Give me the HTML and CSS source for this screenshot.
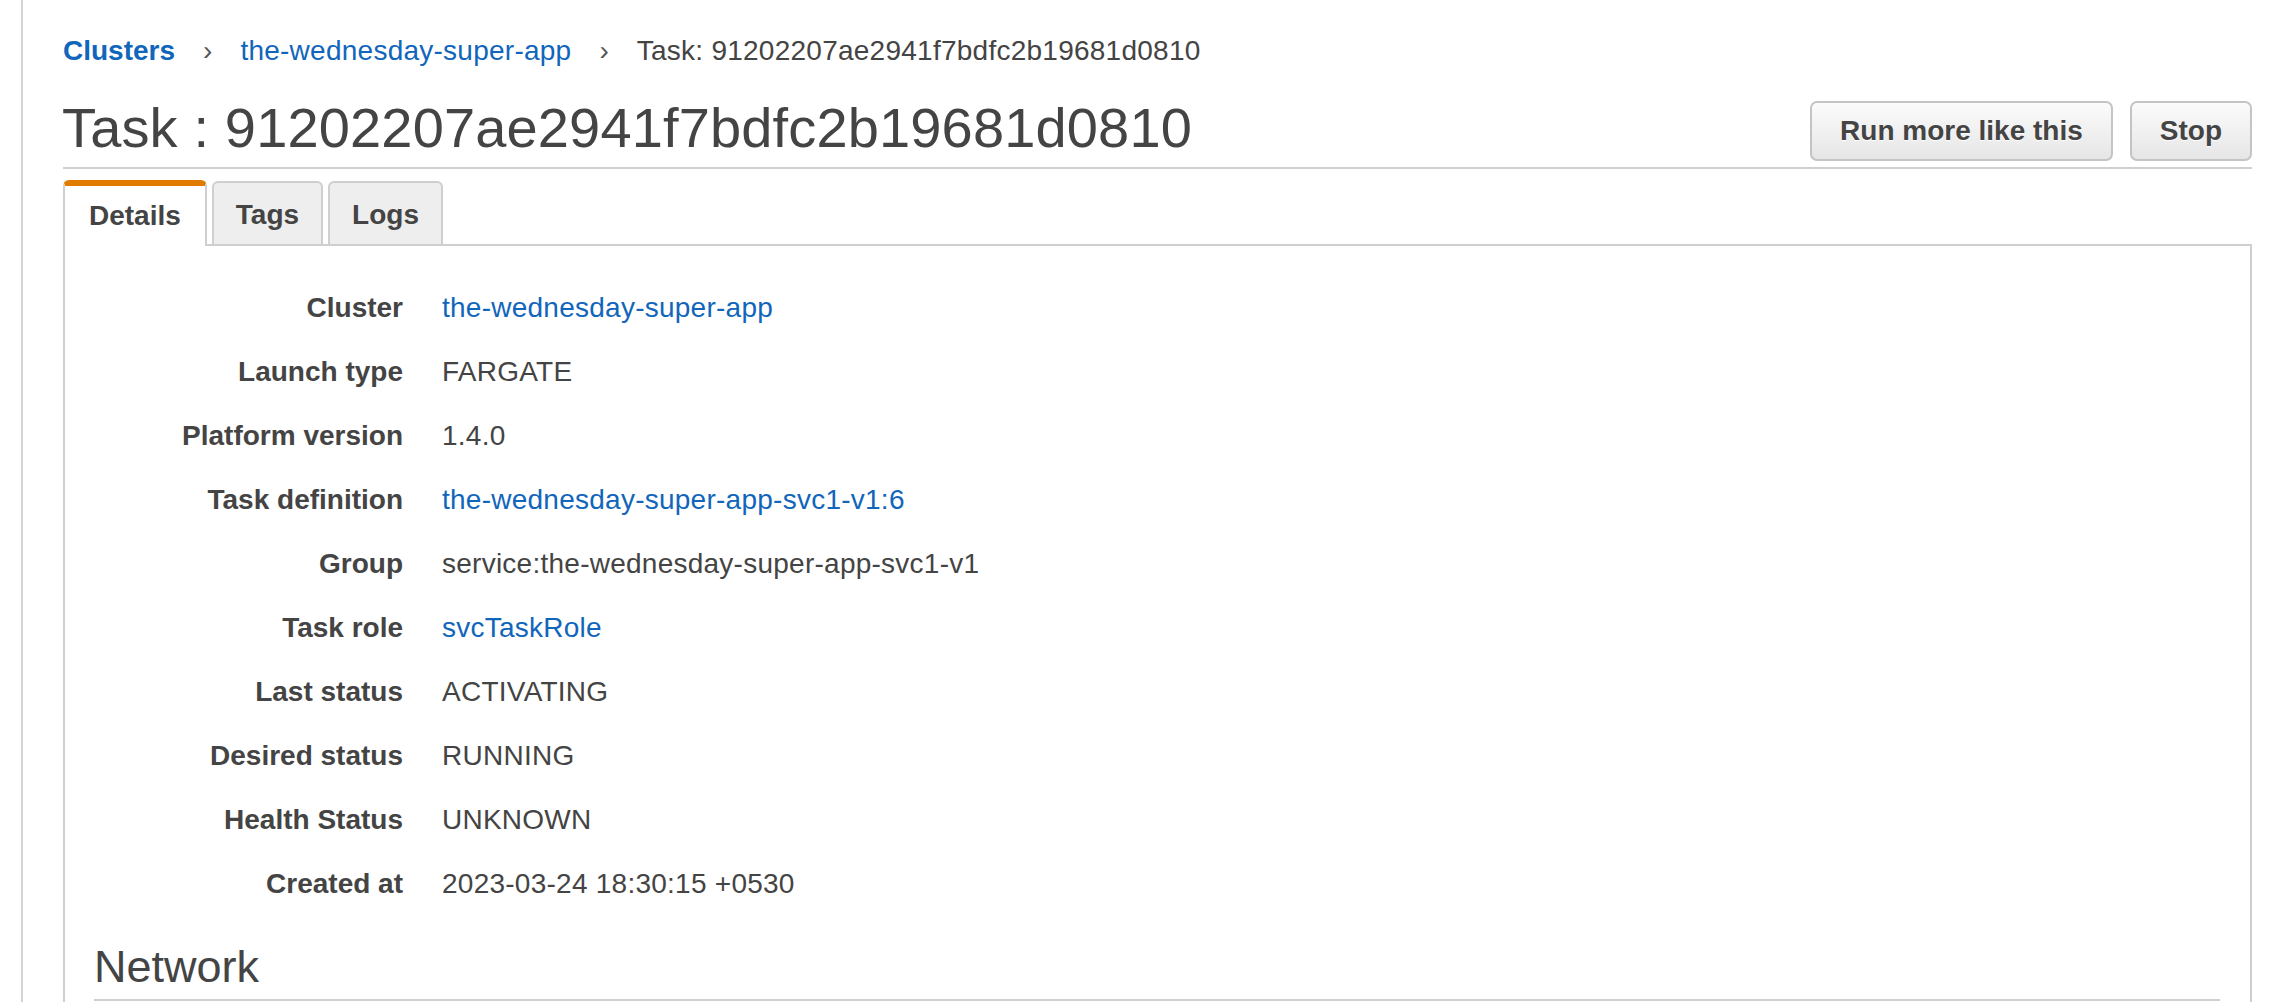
FILE: index.html
```html
<!DOCTYPE html>
<html lang="en">
<head>
<meta charset="utf-8">
<title>Task : 91202207ae2941f7bdfc2b19681d0810</title>
<link rel="stylesheet" href="styles.css">
</head>
<body>
<div class="frame">
  <nav class="breadcrumb">
    <a class="crumb crumb-root" href="#">Clusters</a>
    <span class="sep">›</span>
    <a class="crumb" href="#">the-wednesday-super-app</a>
    <span class="sep">›</span>
    <span class="crumb current">Task: 91202207ae2941f7bdfc2b19681d0810</span>
  </nav>

  <header class="page-header">
    <h1 class="title">Task : 91202207ae2941f7bdfc2b19681d0810</h1>
    <div class="actions">
      <button class="btn">Run more like this</button>
      <button class="btn">Stop</button>
    </div>
  </header>

  <div class="tabs">
    <div class="tab active">Details</div>
    <div class="tab">Tags</div>
    <div class="tab">Logs</div>
  </div>

  <section class="panel">
    <dl class="details">
      <dt>Cluster</dt><dd><a href="#">the-wednesday-super-app</a></dd>
      <dt>Launch type</dt><dd>FARGATE</dd>
      <dt>Platform version</dt><dd>1.4.0</dd>
      <dt>Task definition</dt><dd><a href="#">the-wednesday-super-app-svc1-v1:6</a></dd>
      <dt>Group</dt><dd>service:the-wednesday-super-app-svc1-v1</dd>
      <dt>Task role</dt><dd><a href="#">svcTaskRole</a></dd>
      <dt>Last status</dt><dd>ACTIVATING</dd>
      <dt>Desired status</dt><dd>RUNNING</dd>
      <dt>Health Status</dt><dd>UNKNOWN</dd>
      <dt>Created at</dt><dd>2023-03-24 18:30:15 +0530</dd>
    </dl>
    <h2 class="section-title">Network</h2>
  </section>
</div>
</body>
</html>
```

FILE: styles.css
```css
html, body {
  margin: 0;
  padding: 0;
  background: #ffffff;
}

body {
  font-family: "Liberation Sans", Arial, Helvetica, sans-serif;
  color: #444444;
  font-size: 28px;
  overflow: hidden;
  height: 1002px;
}

a {
  color: #1166bb;
  text-decoration: none;
}

.frame {
  margin-left: 21px;
  border-left: 2px solid #d3d3d3;
  padding: 31px 18px 0 40px;
  height: 1002px;
  box-sizing: border-box;
  overflow: hidden;
}

/* Breadcrumb */
.breadcrumb {
  display: flex;
  align-items: baseline;
  line-height: 40px;
  height: 40px;
  font-size: 28px;
  white-space: nowrap;
}

.crumb {
  letter-spacing: 0.25px;
}

.crumb-root {
  font-weight: bold;
  letter-spacing: 0;
}

.sep {
  margin: 0 28px;
  color: #555555;
}

.current {
  color: #444444;
}

/* Header */
.page-header {
  display: flex;
  align-items: flex-end;
  justify-content: space-between;
  margin-top: 24px;
  padding-bottom: 6px;
  border-bottom: 2px solid #cfcfcf;
}

.title {
  margin: 0 0 0 -1px;
  font-size: 56px;
  font-weight: normal;
  line-height: 66px;
  letter-spacing: 0.15px;
  color: #444444;
  white-space: nowrap;
}

.actions {
  display: flex;
  gap: 17px;
}

.btn {
  font-family: "Liberation Sans", Arial, Helvetica, sans-serif;
  font-size: 28px;
  font-weight: bold;
  color: #444444;
  height: 60px;
  padding: 0 28px;
  border: 2px solid #c4c4c4;
  border-radius: 7px;
  background: linear-gradient(#fbfbfb, #e6e6e6);
  text-shadow: 0 1px 0 #ffffff;
  cursor: pointer;
}

/* Tabs */
.tabs {
  display: flex;
  align-items: flex-end;
  gap: 5px;
  margin-top: 11px;
  border-bottom: 2px solid #cfcfcf;
}

.tab {
  box-sizing: border-box;
  height: 63px;
  display: flex;
  align-items: center;
  padding: 2px 22px 0;
  font-weight: bold;
  font-size: 28px;
  color: #444444;
  background: #eeeeee;
  border: 2px solid #cfcfcf;
  border-bottom: none;
  border-radius: 6px 6px 0 0;
}

.tab.active {
  height: 66px;
  margin-bottom: -2px;
  padding: 0 24px;
  background: #ffffff;
  border-top: 6px solid #e07b00;
}

/* Panel */
.panel {
  border: 2px solid #cfcfcf;
  border-top: none;
  padding: 30px 30px 0 29px;
  min-height: 800px;
}

.details {
  display: grid;
  grid-template-columns: 309px 1fr;
  column-gap: 39px;
  margin: 0;
}

.details dt,
.details dd {
  margin: 0;
  height: 64px;
  line-height: 64px;
  white-space: nowrap;
}

.details dt {
  font-weight: bold;
  text-align: right;
}

.details dd {
  letter-spacing: 0.25px;
}

.section-title {
  margin: 27px 0 0;
  font-size: 45px;
  font-weight: normal;
  line-height: 48px;
  padding-bottom: 8px;
  border-bottom: 2px solid #cfcfcf;
}
```
